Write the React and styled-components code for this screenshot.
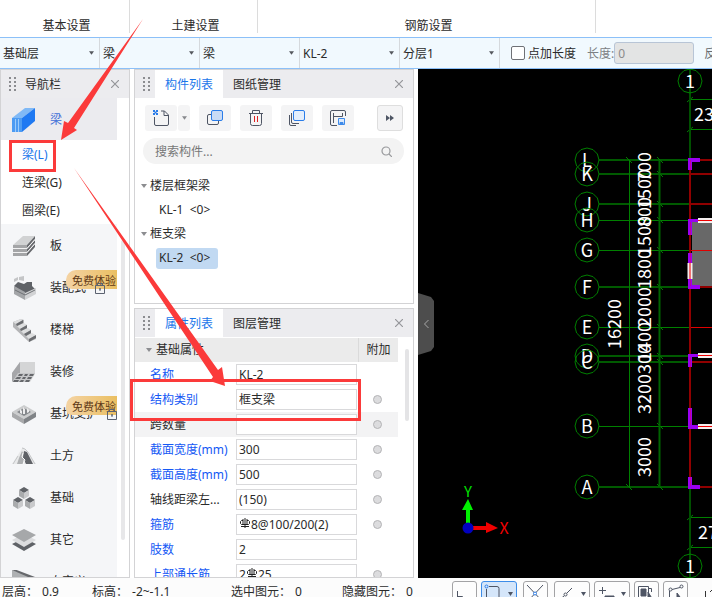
import React, { useState } from 'react';
import styled, { createGlobalStyle } from 'styled-components';

const GlobalStyle = createGlobalStyle`
    *{
    box-sizing: border-box;
    }
    body{
    margin: 0;
    background: #fcfcfc;
    color: #2b2b2b;
    font-family: "Noto Sans", "Noto Sans CJK SC", sans-serif;
    font-size: 12px;
    line-height: 16px;
    }
    button, input, select{
    margin: 0;
    padding: 0;
    border: 0;
    border-radius: 0;
    background: transparent;
    color: inherit;
    font: inherit;
    outline: none;
    }
    ul{
    margin: 0;
    padding: 0;
    list-style: none;
    }
    svg{
    display: block;
    flex: none;
    }
`;

const Page = styled.div`
    position: relative;
    height: 100vh;
    display: flex;
    flex-direction: column;
    overflow: hidden;
`;

/* ribbon */
const Ribbon = styled.header`
    flex: none;
    height: 37px;
    display: grid;
    grid-template-columns: 130px 128px 338px 1fr;
    background: #fff;
`;

const RibbonGroup = styled.div`
    height: 33px;
    padding: 18px 0 0 4px;
    border-right: 1px solid ${props => (props.$last ? 'transparent' : '#dcdcdc')};
    text-align: center;
`;

const OptionBar = styled.div`
    flex: none;
    height: 32px;
    display: flex;
    align-items: stretch;
    background: #f1f9fe;
    border-top: 1px solid #8cc0f8;
    border-bottom: 1px solid #8cc0f8;
    overflow: hidden;
    white-space: nowrap;
`;

const SelectBox = styled.label`
    position: relative;
    flex: none;
    width: 100px;
    display: flex;
    align-items: center;
    border-right: 1px solid #d5d9dd;
    svg{
    position: absolute;
    right: 5px;
    pointer-events: none;
    }
    select{
    width: 100%;
    height: 100%;
    padding: 2px 0 0 3px;
    appearance: none;
    }
`;

const CheckLabel = styled.label`
    display: flex;
    align-items: center;
    gap: 3px;
    margin: 0 11px;
    span{
    padding-top: 2px;
    }
    input{
    width: 14px;
    height: 14px;
    appearance: none;
    background: #fff;
    border: 1px solid #6f7176;
    border-radius: 2px;
    }
`;

const LengthLabel = styled.label`
    display: flex;
    align-items: center;
    color: #7c8084;
    span{
    padding-top: 2px;
    }
    input{
    width: 80px;
    height: 22px;
    padding-left: 3px;
    background: #e3e4e4;
    border: 1px solid #b8c5d6;
    border-radius: 3px;
    color: #8c8c8c;
    }
`;

const CutText = styled.span`
    align-self: center;
    margin-left: 10px;
    padding-top: 2px;
    color: #6a6e72;
`;

/* work area */
const Work = styled.main`
    flex: 1;
    min-height: 0;
    display: flex;
    background: #fff;
`;

const Panel = styled.section`
    min-height: 0;
    display: flex;
    flex-direction: column;
    background: #fff;
    border: 1px solid #d3d3d5;
    overflow: hidden;
`;

const NavPanel = styled(Panel)`
    flex: none;
    width: 130px;
    margin-right: 4px;
`;

const Dock = styled.div`
    flex: none;
    width: 280px;
    margin-right: 4px;
    display: flex;
    flex-direction: column;
    gap: 4px;
`;

const ComponentPanel = styled(Panel)`
    flex: none;
    height: 235px;
`;

const PropertyPanel = styled(Panel)`
    flex: 1;
`;

const PanelHead = styled.div`
    flex: none;
    height: 28px;
    display: flex;
    align-items: center;
    background: #ececef;
`;

const Grip = styled.span`
    flex: none;
    width: 20px;
    display: flex;
    justify-content: center;
    padding-left: 3px;
`;

const NavTitle = styled.span`
    padding: 2px 0 0 4px;
`;

const Tab = styled.button`
    height: 100%;
    padding: 2px 10px 0;
    background: ${props => (props.$on ? '#fff' : 'transparent')};
    color: ${props => (props.$on ? '#1a76ea' : '#2b2b2b')};
`;

const CloseButton = styled.button`
    margin-left: auto;
    padding: 0 10px;
`;

const NavBody = styled.div`
    flex: 1;
    min-height: 0;
    display: flex;
    justify-content: space-between;
    overflow: hidden;
`;

const NavList = styled.ul`
    width: 116px;
`;

const NavItem = styled.li`
    position: relative;
    height: 42px;
    display: flex;
    align-items: center;
    padding: 2px 0 0 11px;
    background: ${props => (props.$on ? '#ebebef' : '#f5f6f8')};
    color: ${props => (props.$on ? '#3f6fd8' : '#2b2b2b')};
    white-space: nowrap;
    svg{
    position: relative;
    z-index: 2;
    }
    button{
    margin: 0 9px 0 14px;
    }
`;

const SubItem = styled.li`
    height: 28px;
    display: flex;
    align-items: center;
    padding: 2px 0 0 21px;
    color: ${props => (props.$on ? '#1a76ea' : '#2b2b2b')};
`;

const Trial = styled.span`
    position: absolute;
    z-index: 1;
    top: 4px;
    right: 0;
    width: 51px;
    height: 19px;
    padding-left: 6px;
    border-radius: 10px 0 0 6px;
    background: linear-gradient(90deg, #f4d3a4, #eabf62);
    color: #5e3816;
    font-size: 11px;
    line-height: 21px;
`;

const NavThumb = styled.span`
    width: 4px;
    height: 300px;
    margin: 142px 4px 0 0;
    border-radius: 2px;
    background: #e7e7e9;
`;

const Tools = styled.div`
    display: flex;
    gap: 9px;
    padding: 7px 10px;
`;

const SplitTool = styled.span`
    display: flex;
    gap: 1px;
`;

const Tool = styled.button`
    width: ${props => props.$w || 32}px;
    height: 26px;
    display: flex;
    align-items: center;
    justify-content: center;
    background: #f4f4f5;
    border-radius: 3px;
`;

const MoreTool = styled(Tool)`
    margin-left: auto;
    border: 1px solid #dedede;
`;

const SearchBox = styled.label`
    height: 26px;
    margin: 0 9px 0 8px;
    padding: 0 12px;
    display: flex;
    align-items: center;
    border-radius: 13px;
    background: #f3f3f3;
    input{
    flex: 1;
    min-width: 0;
    padding-top: 2px;
    }
    input::placeholder{
    color: #777;
    opacity: 1;
    }
`;

const Tree = styled.ul`
    padding: 10px 6px;
`;

const TreeRow = styled.li`
    height: 24px;
    display: flex;
    align-items: center;
    gap: 3px;
    white-space: pre;
`;

const TreeLeaf = styled.button`
    height: 21px;
    margin-left: 15px;
    padding: 0 8px 0 3px;
    border-radius: 3px;
    background: ${props => (props.$on ? '#c1d9f2' : 'transparent')};
    white-space: pre;
`;

/* property table */
const PropertyBody = styled.div`
    flex: 1;
    min-height: 0;
    display: flex;
    margin-top: 1px;
    overflow: hidden;
`;

const PropertyTable = styled.table`
    flex: 1;
    align-self: flex-start;
    border-collapse: collapse;
    table-layout: fixed;
    th, td{
    padding: 0;
    text-align: left;
    font-weight: normal;
    white-space: nowrap;
    }
    thead th{
    height: 24px;
    padding-left: 11px;
    background: #ebebeb;
    }
    thead th + th{
    width: 40px;
    padding-left: 8px;
    border-left: 1px solid #dadada;
    }
    thead span{
    display: flex;
    align-items: center;
    gap: 4px;
    }
`;

const PropertyRow = styled.tr`
    height: 25px;
    background: ${props => (props.$shade ? '#f3f3f4' : '#fff')};
    th{
    width: 101px;
    padding-left: 15px;
    color: ${props => (props.$dark ? '#2b2b2b' : '#1458f5')};
    }
    td:last-child{
    padding-left: 15px;
    }
`;

const Field = styled.span`
    width: 121px;
    height: 21px;
    display: flex;
    align-items: center;
    padding-left: 2px;
    background: #fff;
    border: 1px solid #d9d9db;
    svg{
    margin: 0 1px 4px;
    }
    input{
    flex: 1;
    min-width: 0;
    }
`;

const Dot = styled.input`
    display: block;
    width: 9px;
    height: 9px;
    appearance: none;
    border: 1px solid #b4b4b6;
    border-radius: 50%;
    background: #dcdcde;
`;

const PropertyThumb = styled.span`
    flex: none;
    width: 4px;
    height: 72px;
    margin: 11px 4px 0 7px;
    border-radius: 2px;
    background: #e4e4e6;
`;

/* drawing view */
const View = styled.div`
    position: relative;
    flex: 1;
    min-width: 0;
    background: #000;
    overflow: hidden;
    svg text{
    fill: #fff;
    font-family: "Noto Sans CJK SC", sans-serif;
    font-size: 18px;
    text-anchor: middle;
    }
`;

const Collapse = styled.button`
    position: absolute;
    left: 0;
    top: 224px;
    width: 16px;
    height: 62px;
    display: flex;
    align-items: center;
    justify-content: center;
    background: #4d4d4d;
    clip-path: polygon(0 0, 13px 4px, 100% 8px, 100% 54px, 13px 58px, 0 100%);
`;

/* status bar */
const StatusBar = styled.footer`
    flex: none;
    height: 19px;
    display: grid;
    grid-template-columns: 90px 139px 111px 110px 1fr;
    padding: 3px 0 0 2px;
    background: #fcfcfc;
    overflow: hidden;
    line-height: 22px;
    white-space: nowrap;
`;

const StatusItem = styled.span`
    display: flex;
    gap: 4px;
`;

const SnapTools = styled.div`
    display: flex;
    gap: 4px;
`;

const SnapButton = styled.button`
    flex: none;
    width: ${props => (props.$wide ? 36 : 25)}px;
    height: 24px;
    margin-right: ${props => (props.$space ? 2 : 0)}px;
    border: 1px solid ${props => (props.$on ? '#3d8ce8' : '#a3a3a5')};
    border-radius: 3px;
    background: ${props => (props.$on ? '#d5e6fa' : '#fdfdfd')};
`;

const Marks = styled.svg`
    position: absolute;
    left: 0;
    top: 0;
    z-index: 3;
    pointer-events: none;
`;

const Caret = ({ color = '#55585e', size = 6 }) => (
    <svg width={size} height="4" viewBox="0 0 6 4"><path d="M0 0h6L3 4z" fill={color} /></svg>
);

const GripDots = () => (
    <svg width="7" height="14" fill="#8b8c90">
        {[0, 4, 8, 12].map(y => <path key={y} d={`M0 ${y}h2v2h-2zM5 ${y}h2v2h-2z`} />)}
    </svg>
);

const Cross = () => (
    <svg width="8" height="8" stroke="#95969a" strokeWidth="1.2"><path d="M0 0l8 8M8 0l-8 8" /></svg>
);

const Lock = () => (
    <svg width="10" height="11" fill="none" stroke="#5b6270">
        <path d="M.5 2.500h9v8h-9zM2.500 2V.5h5V2" /><path d="M5 5v3M4 6h2" />
    </svg>
);

// rebar grade mark
const Rebar = () => (
    <svg width="10" height="10" fill="none" stroke="#222" strokeWidth="1">
        <path d="M5 0v10M3 1v6M7 1v6M1 8.500h8" /><path d="M3 2.500H1.500l-1 1v2l1 1h7l1-1v-2l-1-1H7" />
    </svg>
);

const navIcons = {
    beam: <>
        <path d="M0 10L13 0h10L10 10z" fill="#80b9f6" /><path d="M0 10h10v14H0z" fill="#4c9bf3" />
        <path d="M10 10L23 0v13L10 24z" fill="#1f79f2" /><path d="M3.500 11v13M6.500 11v13" stroke="#9bcbfb" />
    </>,
    slab: <>
        <path d="M1 11L11 2h12L15 11z" fill="#d1d2d3" />
        <path d="M1 11h14v3H1zM1 15h14v3H1zM1 19h14v3H1z" fill="#a4a5a7" />
        <path d="M15 11l8-9v3l-8 9zM15 15l8-9v3l-8 9zM15 19l8-9v3l-8 9z" fill="#66686c" />
        <path d="M1 14.500h14l8-9M1 18.500h14l8-9" stroke="#f1f1f2" fill="none" />
    </>,
    precast: <>
        <path d="M2 10l4-4 6 2 3-2h5v4l3 3-10 5z" fill="#5f6267" />
        <path d="M2 10l11 6v8L2 18z" fill="#a3a5a8" />
        <path d="M13 17l11-5v6l-11 6z" fill="#d2d3d5" />
        <path d="M2 6V3l4-2v3zM7 4V1l5-1v5z" fill="#c4c5c7" />
        <path d="M3 14l10 5 10-5" stroke="#6f7276" fill="none" />
    </>,
    stairs: <>
        <path d="M1 4l8-3 3 1v4l3 1v4l4 1v4l5 2v3l-7 3L1 9z" fill="#b4b5b7" />
        <path d="M1 4l8-3 2 1-7 4zM5 8l7-3 3 2-7 4zM9 13l7-3 3 2-7 4zM14 18l6-3 4 2-7 4z" fill="#dedfe0" />
        <path d="M4 6l7-4v3L5 8zM8 11l7-4v3l-6 3zM12 16l7-4v3l-5 3zM17 21l7-4v3l-7 4z" fill="#6a6c70" />
    </>,
    finish: <>
        <path d="M0 13L8 2h15v12l-5 8H0z" fill="#d4d5d6" />
        <path d="M0 13L8 2v11L0 22z" fill="#a5a6a9" /><path d="M0 22l6-9h17l-6 9z" fill="#c6c7c9" />
        <path d="M7 14h4l-1 2H6zM13 14h3l-1 2h-3zM18 14h4l-1 2h-4zM5 17h4l-1 2H3zM11 17h3l-1 2h-3zM16 17h4l-1 2h-4zM2 20h5l-1 2H1zM9 20h3l-1 2H7zM14 20h4l-1 2h-4z" fill="#66686c" />
    </>,
    pit: <>
        <path d="M0 10l12-7 12 7-12 7z" fill="#cccdce" />
        <path d="M0 10l12 7v5L0 15z" fill="#a8a9ab" /><path d="M12 17l12-7v5l-12 7z" fill="#808387" />
        <path d="M5 10l7-4 7 4-7 4z" fill="#85888c" />
        <path d="M8 11V7l2 2v3zM11 12V5l2 2v5zM15 11V6l2 2v2z" fill="#ededee" />
    </>,
    earth: <>
        <path d="M0 20L11 3l13 17z" fill="#e8e9ea" /><path d="M5 20l2-6 3-7 2 4-1 9z" fill="#aeb0b2" />
        <path d="M12 7l3 1 6 12h-7l-3-6z" fill="#5f6267" /><path d="M1 20l5-8M10 4l3 1 3 3 7 12" stroke="#c4c6c8" fill="none" />
        <path d="M11 9l-1 4 3 3-2 4" stroke="#fff" fill="none" />
    </>,
    base: <>
        {[[7, 1], [1, 11], [13, 11]].map(([x, y]) => (
            <g key={x} transform={`translate(${x} ${y})`}>
                <path d="M0 3l5-3 5 3-5 3z" fill="#5f6267" /><path d="M0 3l5 3v6L0 9z" fill="#a9abad" />
                <path d="M5 6l5-3v6l-5 3z" fill="#c9cacc" />
            </g>
        ))}
    </>,
    other: <>
        <path d="M0 16l12-6 12 6-12 7z" fill="#5f6267" />
        <path d="M0 12l12-6 12 6-12 7z" fill="#dcdddf" /><path d="M0 7l12-6 12 6-12 7z" fill="#a6a8aa" />
    </>,
    custom: <>
        <path d="M0 0l24 8v16H0z" fill="#aeb0b2" /><path d="M0 0l2-1 21 8v3z" fill="#66686c" />
    </>,
};

const navItems = [
    { icon: 'slab', name: '板' },
    { icon: 'precast', name: '装配式', trial: true },
    { icon: 'stairs', name: '楼梯' },
    { icon: 'finish', name: '装修' },
    { icon: 'pit', name: '基坑支护', trial: true },
    { icon: 'earth', name: '土方' },
    { icon: 'base', name: '基础' },
    { icon: 'other', name: '其它' },
    { icon: 'custom', name: '自定义' },
];

const NavIcon = ({ name }) => (
    <svg width="24" height="24" viewBox="0 0 24 24">{navIcons[name]}</svg>
);

const selects = [
    { label: '楼层', value: '基础层' },
    { label: '构件大类', value: '梁' },
    { label: '构件类型', value: '梁' },
    { label: '构件', value: 'KL-2' },
    { label: '分层', value: '分层1' },
];

const properties = [
    { name: '名称', value: 'KL-2', noDot: true },
    { name: '结构类别', value: '框支梁' },
    { name: '跨数量', value: '', dark: true, shade: true },
    { name: '截面宽度(mm)', value: '300' },
    { name: '截面高度(mm)', value: '500' },
    { name: '轴线距梁左...', value: '(150)', dark: true },
    { name: '箍筋', value: '8@100/200(2)', rebar: true },
    { name: '肢数', value: '2', noDot: true },
    { name: '上部通长筋', value: '25', rebar: true, count: '2' },
];

const Navigator = () => (
    <NavPanel>
        <PanelHead>
            <Grip><GripDots /></Grip>
            <NavTitle>导航栏</NavTitle>
            <CloseButton aria-label="关闭"><Cross /></CloseButton>
        </PanelHead>
        <NavBody>
            <NavList>
                <NavItem $on><NavIcon name="beam" /><button>梁</button></NavItem>
                <SubItem $on><button>梁(L)</button></SubItem>
                <SubItem><button>连梁(G)</button></SubItem>
                <SubItem><button>圈梁(E)</button></SubItem>
                {navItems.map(item => (
                    <NavItem key={item.icon}>
                        <NavIcon name={item.icon} />
                        <button>{item.name}</button>
                        {item.trial && <Lock />}
                        {item.trial && <Trial>免费体验</Trial>}
                    </NavItem>
                ))}
            </NavList>
            <NavThumb />
        </NavBody>
    </NavPanel>
);

const Components = () => (
    <ComponentPanel>
        <PanelHead>
            <Grip><GripDots /></Grip>
            <Tab $on>构件列表</Tab>
            <Tab>图纸管理</Tab>
            <CloseButton aria-label="关闭"><Cross /></CloseButton>
        </PanelHead>
        <Tools>
            <SplitTool>
                <Tool aria-label="新建">
                    <svg width="16" height="16" fill="none" stroke="#4e5564">
                        <path d="M1.500 7v7q0 1.500 1.500 1.500h11q1.500 0 1.500-1.500V5l-4-4H8M11 1v4.500h4.500" />
                        <path d="M0 0h2v2H0zM3 0h2v2H3zM1.500 1.500h2v2h-2zM0 3h2v2H0zM3 3h2v2H3z" fill="#2b7de9" stroke="none" />
                    </svg>
                </Tool>
                <Tool $w={12} aria-label="新建菜单"><Caret color="#87898d" size={5} /></Tool>
            </SplitTool>
            <Tool aria-label="复制">
                <svg width="16" height="16" fill="none">
                    <rect x=".5" y="4.500" width="11" height="10" rx="1.500" stroke="#4e5564" />
                    <rect x="4.500" y=".5" width="11" height="10" rx="1.500" fill="#c9dbf5" stroke="#2b7de9" />
                </svg>
            </Tool>
            <Tool aria-label="删除">
                <svg width="14" height="16" fill="none" stroke="#4e5564">
                    <path d="M0 3.500h14M3.500 3V.5h7V3M1.500 4v9.500q0 2 2 2h7q2 0 2-2V4" />
                    <path d="M5.500 6v6M8.500 6v6" stroke="#e02020" />
                </svg>
            </Tool>
            <Tool aria-label="层间复制">
                <svg width="16" height="16" fill="none" stroke="#4e5564">
                    <path d="M.5 5v9q0 1.500 1.500 1.500h5M2.500 3v9q0 1.500 1.500 1.500h6" />
                    <rect x="4.500" y=".5" width="11" height="10" rx="1.500" fill="#e3eefc" stroke="#2b7de9" />
                </svg>
            </Tool>
            <Tool aria-label="存档">
                <svg width="16" height="16" fill="none" stroke="#4e5564">
                    <path d="M15.500 6V2q0-1.500-1.500-1.500H2Q.5.500.5 2v12q0 1.500 1.500 1.500h5M3.500 3v10M3.500 6.500h9M12.500 3v3.500" />
                    <path d="M8.500 8.500h6v6h-6z" fill="#dbe9fb" stroke="#3f8bea" /><path d="M10 12.500h3v2h-3z" fill="#3f8bea" stroke="#3f8bea" />
                </svg>
            </Tool>
            <MoreTool $w={26} aria-label="更多">
                <svg width="8" height="6" fill="#4e5564"><path d="M0 0l4 3-4 3zM4 0l4 3-4 3z" /></svg>
            </MoreTool>
        </Tools>
        <SearchBox>
            <input placeholder="搜索构件..." aria-label="搜索构件" />
            <svg width="11" height="11" fill="none" stroke="#98999c" strokeWidth="1.200">
                <circle cx="5" cy="5" r="4" /><path d="M8 8l3 3" />
            </svg>
        </SearchBox>
        <Tree>
            <TreeRow><Caret color="#8c8d90" />楼层框架梁</TreeRow>
            <TreeRow><TreeLeaf>{'KL-1  <0>'}</TreeLeaf></TreeRow>
            <TreeRow><Caret color="#8c8d90" />框支梁</TreeRow>
            <TreeRow><TreeLeaf $on>{'KL-2  <0>'}</TreeLeaf></TreeRow>
        </Tree>
    </ComponentPanel>
);

const Properties = () => (
    <PropertyPanel>
        <PanelHead>
            <Grip><GripDots /></Grip>
            <Tab $on>属性列表</Tab>
            <Tab>图层管理</Tab>
            <CloseButton aria-label="关闭"><Cross /></CloseButton>
        </PanelHead>
        <PropertyBody>
            <PropertyTable>
                <thead>
                    <tr>
                        <th colSpan="2"><span><Caret color="#8c8d90" />基础属性</span></th>
                        <th>附加</th>
                    </tr>
                </thead>
                <tbody>
                    {properties.map((p, i) => (
                        <PropertyRow key={p.name} $dark={p.dark} $shade={p.shade}>
                            <th><label htmlFor={`prop${i}`}>{p.name}</label></th>
                            <td>
                                <Field>
                                    {p.count}
                                    {p.rebar && <Rebar />}
                                    <input id={`prop${i}`} defaultValue={p.value} />
                                </Field>
                            </td>
                            <td>{!p.noDot && <Dot type="checkbox" aria-label={`附加 ${p.name}`} />}</td>
                        </PropertyRow>
                    ))}
                </tbody>
            </PropertyTable>
            <PropertyThumb />
        </PropertyBody>
    </PropertyPanel>
);

// axis name, y, thick line
const axes = [
    ['L', 160, true], ['K', 174, true], ['J', 204, true], ['H', 220, false], ['G', 250, false], ['F', 287, true],
    ['E', 327, false], ['D', 356, true], ['C', 362, true], ['B', 426, false], ['A', 487, true],
];

const spans = [
    ['700', 167], ['1500', 189], ['800', 212], ['1500', 236], ['1800', 269], ['2000', 307],
    ['1400', 342], ['300', 359], ['3200', 394], ['3000', 457],
];

const Bubble = ({ x, y, name }) => {
    const points = Array.from({ length: 12 }, (_, i) => {
        const a = (Math.PI * i) / 6;
        return `${x + 12 * Math.cos(a)},${y + 12 * Math.sin(a)}`;
    }).join(' ');
    return (
        <g>
            <polygon points={points} fill="none" stroke="#008000" />
            <text x={x} y={y + 7}>{name}</text>
        </g>
    );
};

const Drawing = () => (
    <svg width="100%" height="100%" viewBox="418 69 294 509" preserveAspectRatio="xMinYMin slice">
        <path d="M692 222h20v65h-20z" fill="#686868" />
        {/* axis lines */}
        {axes.map(([name, y, thick]) => (
            <g key={name}>
                <path d={thick ? `M599 ${y}h91` : `M599 ${y}.5h91`} stroke={thick ? '#005a00' : '#008000'} strokeWidth={thick ? 2 : 1} />
                <path d={thick ? `M690 ${y}h22` : `M690 ${y}.5h22`} stroke={thick ? '#900000' : '#e00000'} strokeWidth={thick ? 2 : 1} />
                <path d={`M657 ${y - 3}l6 6`} stroke="#008000" />
            </g>
        ))}
        <path d="M629.500 160v327M690 99.500h22M690 129.500h22M690 517.500h22M690 547.500h22" stroke="#008000" />
        <path d="M659.500 160v327" stroke="#006400" strokeWidth="2" />
        <path d="M626 157l6 6M626 484l6 6M687 102l6-5M687 132l6-5M687 520l6-5M687 550l6-5" stroke="#008000" />
        <path d="M690 69v91M690 487v91" stroke="#005000" strokeWidth="2" />
        <path d="M690 160v327" stroke="#900000" strokeWidth="2" />
        {/* walls and windows */}
        <path d="M698 220.500h14M698 355.500h14M698 426.500h14M690 263v16" stroke="#f4eeee" strokeWidth="5" />
        <path d="M698 220.500h14M698 355.500h14M698 426.500h14" stroke="#f00000" />
        <path d="M690 263v16" stroke="#f07070" strokeWidth="2" />
        <path d="M688 158h12v4h-8v8h-4zM688 219h10v3h-6v13h-4zM688 253h4v10h-4zM688 279h4v6h8v4h-12zM688 354h10v3h-6v10h-4zM688 408h4v17h6v4h-10zM688 477h4v8h8v4h-12z" fill="#9b00f2" />
        <path d="M690.500 160v10M690.500 222v13M690.500 253v10M690.500 280v6M690.500 357v10M690.500 408v17M690.500 477v9" stroke="#c000a0" />
        {axes.map(([name, y]) => <Bubble key={name} x={587} y={y} name={name} />)}
        <Bubble x={690} y={81} name="1" />
        <Bubble x={690} y={566} name="1" />
        {spans.map(([size, y]) => (
            <text key={y} transform={`translate(651 ${y}) rotate(-90)`}>{size}</text>
        ))}
        <text transform="translate(621 324) rotate(-90)">16200</text>
        <text x="704" y="121">23</text>
        <text x="708" y="539">27</text>
        {/* coordinate system */}
        <path d="M466 524v-14h-4l6-11 5 11h-3v14z" fill="#00f000" />
        <path d="M472 526h14v-4l12 6-12 5v-3h-14z" fill="#f00000" />
        <circle cx="468" cy="528" r="5.500" fill="#0000c0" />
        <text x="468" y="497" style={{ fill: '#00e000', fontSize: 15 }}>Y</text>
        <text x="504" y="534" style={{ fill: '#f00000', fontSize: 16 }}>X</text>
    </svg>
);

const snaps = [
    { name: '正交', art: <path d="M4.500 9v14M4.500 14.500h5V24" /> },
    { name: '矩形', wide: true, on: true, space: true, art: <><path d="M7 4.500h8q2 0 2 2V24M4.500 7v17" /><circle cx="4.500" cy="4.500" r="1.500" stroke="#2b7de9" /></> },
    { name: '交点', space: true, art: <><path d="M3 3l16 17M19 3L3 20" /><circle cx="11" cy="11.500" r="1.500" stroke="#2b7de9" fill="#fff" /></> },
    { name: '中点', wide: true, art: <><path d="M3 19l6-5M12 11l5-5" /><circle cx="10.500" cy="12.500" r="1.500" /></> },
    { name: '偏移', wide: true, art: <><path d="M4 8.500h7M7.500 5v7" /><path d="M10 14h9v6h-9z" fill="#4e5564" /></> },
    { name: '选择', art: <><path d="M3.500 4.500h10v14h-10zM14 6.500h2.500V10" /><path d="M6 7h5v7H6z" fill="#4e5564" /><path d="M13 10l5 8h-5z" fill="#4e5564" /></> },
    { name: '多段线', art: <><path d="M5.500 21V9M8 7.500l8-2" /><circle cx="6.500" cy="7.500" r="1.500" /><circle cx="17.500" cy="4.500" r="1.500" /><path d="M13 11l6 8h-6z" fill="#4e5564" /></> },
];

const App = () => {
    const [checked, setChecked] = useState(false);

    return (
        <>
            <GlobalStyle />
            <Page>
                <Ribbon>
                    <RibbonGroup>基本设置</RibbonGroup>
                    <RibbonGroup>土建设置</RibbonGroup>
                    <RibbonGroup>钢筋设置</RibbonGroup>
                    <RibbonGroup $last />
                </Ribbon>
                <OptionBar>
                    {selects.map(s => (
                        <SelectBox key={s.label}>
                            <select aria-label={s.label}><option>{s.value}</option></select>
                            <Caret size={5} />
                        </SelectBox>
                    ))}
                    <CheckLabel>
                        <input type="checkbox" checked={checked} onChange={() => setChecked(!checked)} />
                        <span>点加长度</span>
                    </CheckLabel>
                    <LengthLabel><span>长度:</span><input defaultValue="0" disabled /></LengthLabel>
                    <CutText>反</CutText>
                </OptionBar>
                <Work>
                    <Navigator />
                    <Dock>
                        <Components />
                        <Properties />
                    </Dock>
                    <View>
                        <Drawing />
                        <Collapse aria-label="收起">
                            <svg width="5" height="8" fill="none" stroke="#a8a8a8"><path d="M4.500 0L.5 4l4 4" /></svg>
                        </Collapse>
                    </View>
                </Work>
                <StatusBar>
                    <StatusItem>层高：<span>0.9</span></StatusItem>
                    <StatusItem>标高：<span>-2~-1.1</span></StatusItem>
                    <StatusItem>选中图元：<span>0</span></StatusItem>
                    <StatusItem>隐藏图元：<span>0</span></StatusItem>
                    <SnapTools>
                        {snaps.map(s => (
                            <SnapButton key={s.name} aria-label={s.name} $wide={s.wide} $on={s.on} $space={s.space}>
                                <svg width={s.wide ? 34 : 23} height="22" fill="none" stroke="#4e5564">
                                    {s.art}
                                    {s.wide && <path d="M26 10h5l-2.500 4z" fill="#4e5564" stroke="none" />}
                                </svg>
                            </SnapButton>
                        ))}
                        <svg width="26" height="22" fill="none" stroke="#333"><path d="M20 4.500h5M24.500 4v6M24 5l-6 6M13.500 10v7" /></svg>
                    </SnapTools>
                </StatusBar>
                <Marks width="420" height="430" viewBox="0 0 420 430">
                    <g fill="none" stroke="#fb3a3a" strokeWidth="3">
                        <path d="M10.500 141.500h44v29h-44z" />
                        <path d="M131.500 380.500h228v39h-228z" />
                    </g>
                    <g fill="#fb3a3a">
                        <path d="M143 19L74 128l3 2-16 10 3-19 4 2z" />
                        <path d="M74 168L218 370l4-3 3 19-15-5 3-4z" />
                    </g>
                </Marks>
            </Page>
        </>
    );
};

export default App;
